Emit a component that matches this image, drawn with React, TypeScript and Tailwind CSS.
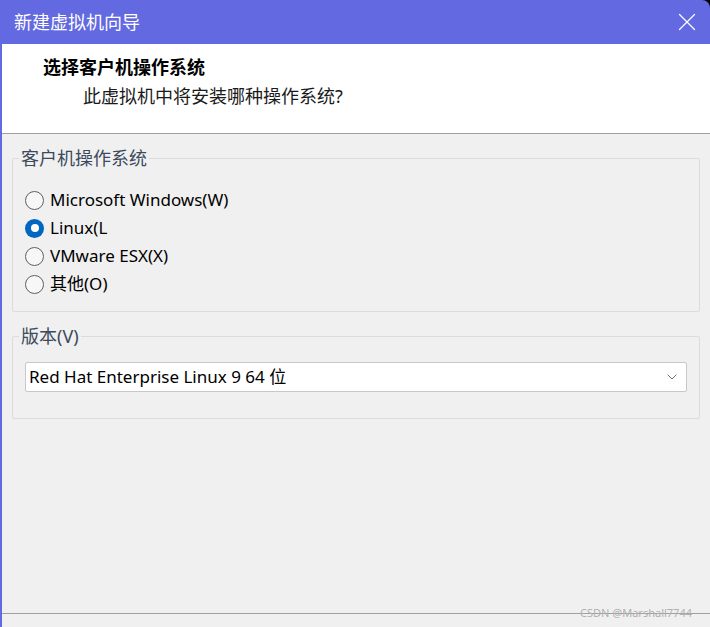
import { ChevronDown, X } from "lucide-react";

const FONT = { fontFamily: '"Noto Sans", "Noto Sans CJK SC", sans-serif' };

const OPTIONS = [
  { label: "Microsoft Windows(W)", checked: false },
  { label: "Linux(L", checked: true },
  { label: "VMware ESX(X)", checked: false },
  { label: "其他(O)", checked: false },
];

function Radio({ checked }: { checked: boolean }) {
  if (checked) {
    return (
      <span className="flex h-[19px] w-[19px] shrink-0 items-center justify-center rounded-full bg-[#0067c0]">
        <span className="h-[8px] w-[8px] rounded-full bg-white" />
      </span>
    );
  }
  return <span className="h-[19px] w-[19px] shrink-0 rounded-full border border-[#5f5f5f] bg-[#f7f7f7]" />;
}

function Group({ title, children }: { title: string; children: React.ReactNode }) {
  return (
    <fieldset className="mx-[10px] rounded-[2px] border border-[#dcdcdc] px-[12px]">
      <legend className="ml-[-6px] px-[2px] text-[18px] leading-[22px] text-[#3c4a5c]">{title}</legend>
      {children}
    </fieldset>
  );
}

export default function App() {
  return (
    <div className="h-[627px] w-[710px] overflow-hidden bg-black" style={FONT}>
      <div className="flex h-full flex-col overflow-hidden rounded-tr-[8px] bg-[#6369e0] pl-[2px]">
        <div className="flex h-[44px] shrink-0 items-center justify-between pl-[12px] pr-[8px]">
          <span className="text-[18px] text-white">新建虚拟机向导</span>
          <X className="h-[30px] w-[30px] text-white" strokeWidth={1} />
        </div>
        <div className="flex flex-1 flex-col bg-[#f0f0f0]">
          <div className="h-[90px] shrink-0 border-b border-[#a0a0a0] bg-white">
            <div className="pl-[41px] pt-[12px] text-[18px] font-bold leading-[22px] text-black">选择客户机操作系统</div>
            <div className="pl-[81px] pt-[7px] text-[18px] leading-[22px] text-[#1a1a1a]">此虚拟机中将安装哪种操作系统?</div>
          </div>
          <div className="pt-[13px]">
            <Group title="客户机操作系统">
              <div className="flex flex-col gap-[6px] pb-[16px] pt-[20px]">
                {OPTIONS.map((o) => (
                  <label key={o.label} className="flex h-[22px] items-center gap-[6px] text-[17px] text-black">
                    <Radio checked={o.checked} />
                    {o.label}
                  </label>
                ))}
              </div>
            </Group>
          </div>
          <div className="pt-[13px]">
            <Group title="版本(V)">
              <div className="pb-[26px] pt-[15px]">
                <div className="flex h-[30px] items-center justify-between rounded-[2px] border border-[#c8c8c8] bg-white pl-[3px] pr-[6px] text-[17px] text-black">
                  <span>Red Hat Enterprise Linux 9 64 位</span>
                  <ChevronDown className="h-[16px] w-[16px] text-[#555]" strokeWidth={1.3} />
                </div>
              </div>
            </Group>
          </div>
          <div className="flex-1" />
          <div className="relative h-[14px] shrink-0 border-t border-[#a0a0a0]">
            <span className="absolute right-[18px] top-[-8px] text-[11px] leading-[14px] text-[#b0b0b0]">CSDN @Marshall7744</span>
          </div>
        </div>
      </div>
    </div>
  );
}
